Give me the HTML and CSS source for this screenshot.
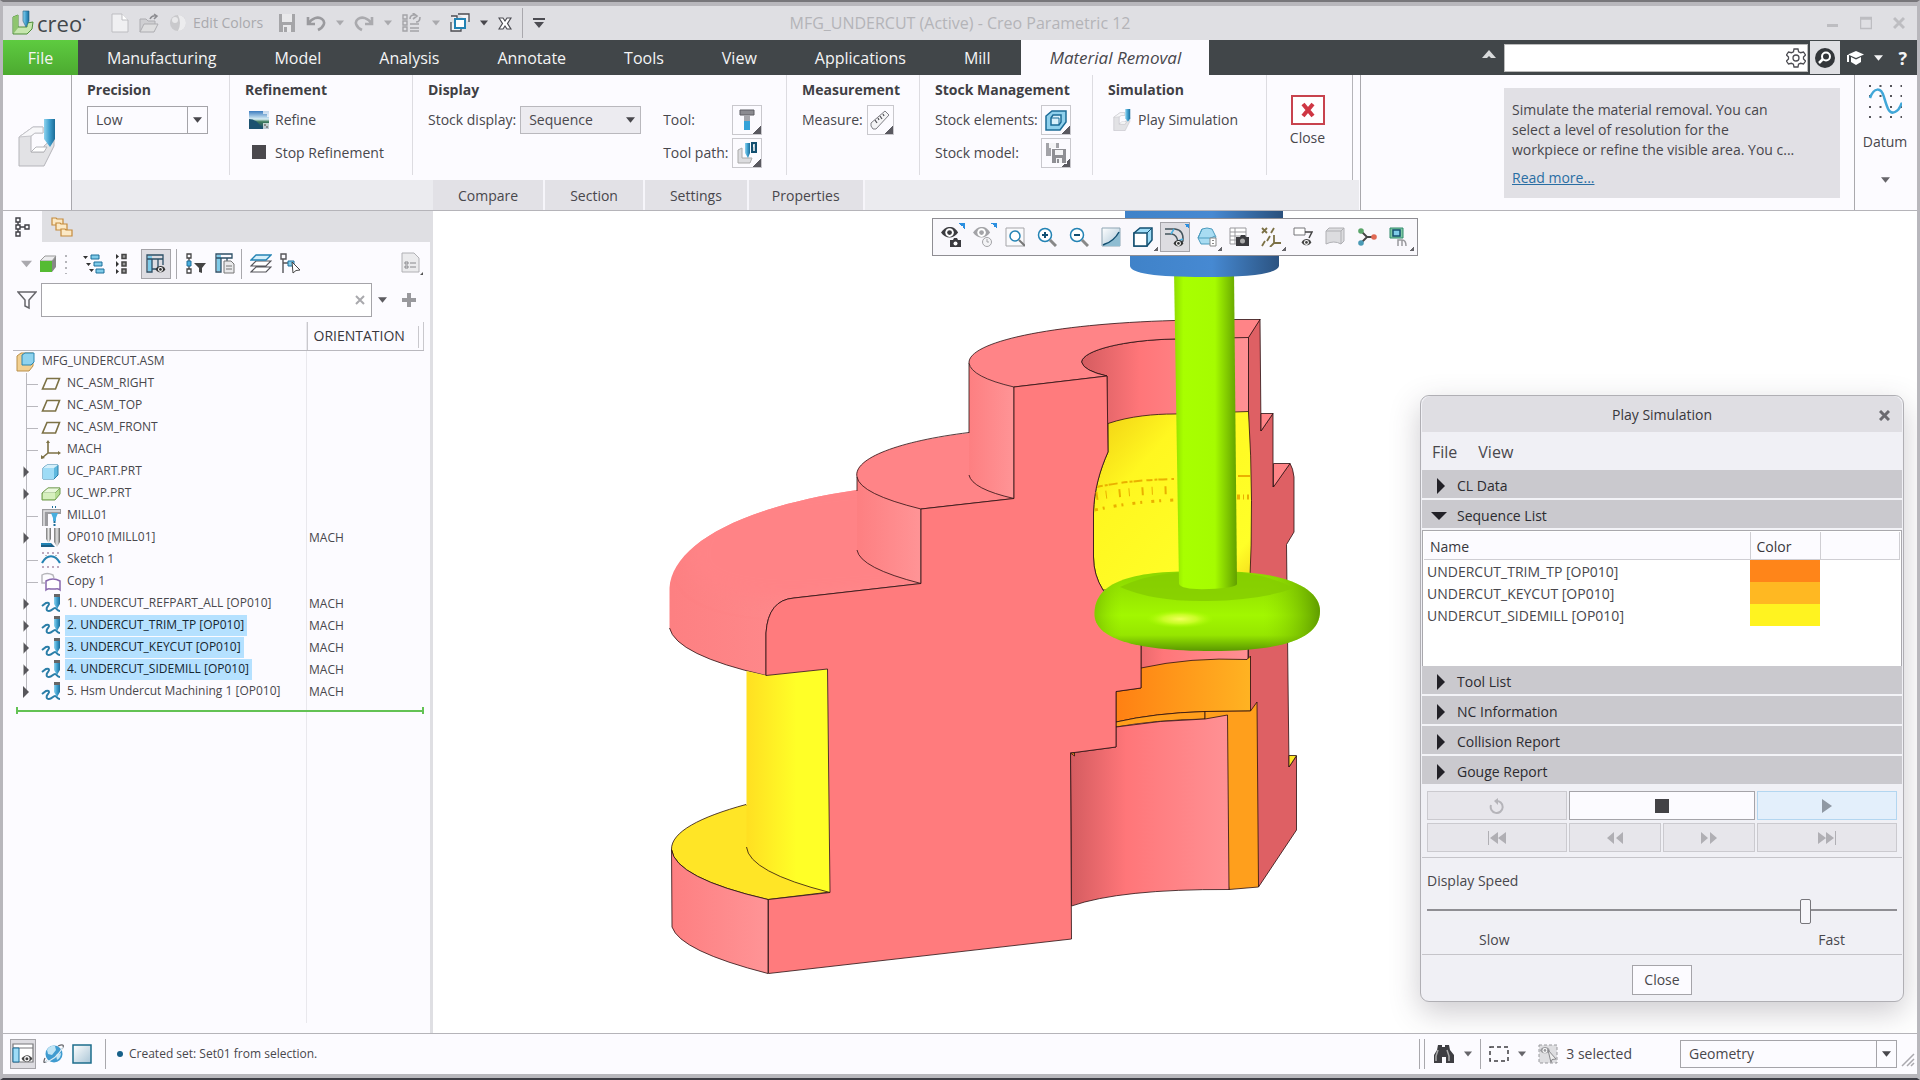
FILE: index.html
```html
<!DOCTYPE html>
<html lang="en">
<head>
<meta charset="utf-8">
<title>MFG_UNDERCUT (Active) - Creo Parametric 12</title>
<link rel="stylesheet" href="styles.css">
</head>
<body>
<svg class="defs" width="0" height="0" aria-hidden="true">
  <defs>
    <linearGradient id="gBlue" x1="0" x2="1"><stop offset="0" stop-color="#8fd3ee"/><stop offset=".5" stop-color="#3f9fce"/><stop offset="1" stop-color="#1c6c97"/></linearGradient>
    <linearGradient id="gGrey" x1="0" x2="1"><stop offset="0" stop-color="#777"/><stop offset=".5" stop-color="#e6e6e6"/><stop offset="1" stop-color="#666"/></linearGradient>
    <linearGradient id="gSheet" x1="0" y1="0" x2="1" y2="1"><stop offset="0" stop-color="#fff"/><stop offset="1" stop-color="#a9c5d6"/></linearGradient>
    <linearGradient id="gLand" x1="0" y1="0" x2="0" y2="1"><stop offset="0" stop-color="#3c7cc0"/><stop offset=".45" stop-color="#d8eef5"/><stop offset=".6" stop-color="#3d7a5a"/><stop offset="1" stop-color="#16476e"/></linearGradient>
    <radialGradient id="gGlobe" cx=".35" cy=".3"><stop offset="0" stop-color="#d5f0fb"/><stop offset="1" stop-color="#2c87bf"/></radialGradient>
    <symbol id="caret" viewBox="0 0 10 6"><path d="M0 0h10L5 6z" fill="currentColor"/></symbol>
    <symbol id="s-path" viewBox="0 0 20 20"><path d="M1 12l4-3c3-1 4 1 2 3s-2 5 1 5 4-3 6-3 2 3 5 3" fill="none" stroke="#2b7ea8" stroke-width="2"/><path d="M13 1h6v9l-3 5-3-5z" fill="url(#gBlue)"/><path d="M13 0h6v3h-6z" fill="#666"/></symbol>
    <symbol id="s-plane" viewBox="0 0 20 20"><path d="M6 4.500h12.500l-4 10.500h-13z" fill="none" stroke="#7c7145" stroke-width="1.600"/></symbol>
    <symbol id="s-br" viewBox="0 0 28 22"><path d="M13.500 0v22M14 11.500h11" stroke="#b9b8be" fill="none"/></symbol>
    <symbol id="s-ex" viewBox="0 0 28 22"><path d="M13.500 0v22" stroke="#b9b8be"/><path d="M10 5v12l6-6z" fill="#58575c"/><path d="M10 5v12" stroke="#fff"/></symbol>
    <symbol id="s-exlast" viewBox="0 0 28 22"><path d="M13.500 0v10" stroke="#b9b8be"/><path d="M10 5v12l6-6z" fill="#58575c"/></symbol>
    <symbol id="s-eye" viewBox="0 0 20 20"><path d="M0 8C5 0 14 0 18 8 13 15 5 15 0 8z" fill="currentColor"/><circle cx="9" cy="8" r="4.500" fill="#fff"/><circle cx="9" cy="8" r="2.500" fill="currentColor"/></symbol>
    <symbol id="s-cut" viewBox="0 0 38 48"><path d="M1 18l14-10h10v6H17l-4 3v16h13v-6l10-9v9L26 47H1z" fill="#e2e2e5" stroke="#b5b5ba"/><path d="M1 18l14-10h10v6H17l-4 3z" fill="#f7f7f9" stroke="#c5c5ca"/><path d="M13 33l5-5h11l-3 5z" fill="#fff" stroke="#b5b5ba"/><path d="M26 0h11v20l-5 8-6-8z" fill="url(#gBlue)"/></symbol>
  </defs>
</svg>
<div class="window">
  <header class="titlebar">
    <svg class="logo" width="24" height="26" viewBox="0 0 24 26"><path d="M2 7l5-2v12h9v-4l6-1-1 7-5 5H2z" fill="#c6e6ae" stroke="#4f8f3a"/><path d="M2 7l5-2v13l-4 5" fill="#8fc56f"/><path d="M12 1h6v10l-3 6-3-6z" fill="url(#gBlue)" stroke="#1d5f85" stroke-width=".6"/></svg>
    <span class="brand">creo<sup>•</sup></span>
    <div class="quick">
      <button aria-label="New"><svg width="18" height="20" viewBox="0 0 18 20"><path d="M1 1h10l6 6v12H1z" fill="#f0f0f2" stroke="#bdbdc1"/><path d="M11 1v6h6" fill="#fff" stroke="#bdbdc1"/></svg></button>
      <button aria-label="Open"><svg width="20" height="20" viewBox="0 0 20 20"><path d="M1 19V6h6l2 2h7v3" fill="#cfcfd2" stroke="#adadb1"/><path d="M1 19l4-8h14l-4 8z" fill="#dededf" stroke="#adadb1"/><path d="M11 6q2-4 6-3m-2-2l3 2-3 3" fill="none" stroke="#8c8c90" stroke-width="1.500"/></svg></button>
      <button class="labelled"><svg width="18" height="20" viewBox="0 0 18 20"><circle cx="9" cy="10" r="8" fill="#c9c9cc"/><path d="M9 2a8 8 0 0 1 0 16q4-8 0-16" fill="#ececee"/><circle cx="6" cy="7" r="3" fill="#e8e8ea"/></svg>Edit Colors</button>
      <button aria-label="Save"><svg width="18" height="20" viewBox="0 0 18 20"><path d="M1 1h16v18H1z" fill="#a5a5a8"/><path d="M4 1h10v8H4zM5 12h8v7H5z" fill="#e9e9eb"/><path d="M6 14h3v5H6z" fill="#a5a5a8"/></svg></button>
      <button aria-label="Undo"><svg width="20" height="18" viewBox="0 0 20 18"><path d="M2 3v7h7M2 10C6 4 12 2 16 5s2 8-4 11" fill="none" stroke="#9a9a9e" stroke-width="2.600"/></svg></button>
      <button class="drop" aria-label="Undo list"><svg width="8" height="6"><use href="#caret"/></svg></button>
      <button aria-label="Redo"><svg width="20" height="18" viewBox="0 0 20 18"><path d="M18 3v7h-7M18 10C14 4 8 2 4 5s-2 8 4 11" fill="none" stroke="#aaaaae" stroke-width="2.600"/></svg></button>
      <button class="drop" aria-label="Redo list"><svg width="8" height="6"><use href="#caret"/></svg></button>
      <button aria-label="Regenerate"><svg width="20" height="20" viewBox="0 0 20 20"><path d="M1 2h4v4H1zM1 8h4v4H1zM1 14h4v4H1zM8 11h9M8 15h9M8 18h9" fill="none" stroke="#a4a4a8" stroke-width="1.400"/><path d="M8 6q0-4 4-4l-1-2 4 3-4 3M18 4q0 5-4 5" fill="none" stroke="#a4a4a8" stroke-width="1.600"/></svg></button>
      <button class="drop" aria-label="Regenerate list"><svg width="8" height="6"><use href="#caret"/></svg></button>
      <button aria-label="Windows"><svg width="20" height="20" viewBox="0 0 20 20"><path d="M8 1h11v8M1 3h6v6M1 9v9h10v-3" fill="#f4f4f6" stroke="#4c4c52" stroke-width="1.300"/><rect x="5" y="6" width="10" height="9" fill="#fff" stroke="#2383b4" stroke-width="2"/></svg></button>
      <button class="drop dark" aria-label="Window list"><svg width="8" height="6"><use href="#caret"/></svg></button>
      <button aria-label="Close window"><svg width="14" height="13" viewBox="0 0 14 13"><path d="M1 1h4l2 3 2-3h4L9.500 6.500 13 12H9L7 9l-2 3H1l3.500-5.500z" fill="#fff" stroke="#4c4c52" stroke-width="1.200"/></svg></button>
      <i class="vr"></i>
      <button aria-label="Customize toolbar"><svg width="12" height="10" viewBox="0 0 12 10"><path d="M0 0h12v2H0zM1 4h10l-5 6z" fill="#4c4c52"/></svg></button>
    </div>
    <h1 class="title">MFG_UNDERCUT (Active) - Creo Parametric 12</h1>
    <div class="winbtns">
      <button aria-label="Minimize"><svg width="12" height="14" viewBox="0 0 12 14"><path d="M0 9.500h11" stroke="#bdbdc1" stroke-width="3"/></svg></button>
      <button aria-label="Maximize"><svg width="12" height="14" viewBox="0 0 12 14"><path d="M.5 1.500h11v11H.5zM1 3h10" fill="none" stroke="#bdbdc1" stroke-width="1.500"/></svg></button>
      <button aria-label="Close"><svg width="12" height="14" viewBox="0 0 12 14"><path d="M1 2l10 10M11 2L1 12" stroke="#bdbdc1" stroke-width="3"/></svg></button>
    </div>
  </header>

  <nav class="tabs">
    <button class="file">File</button>
    <button>Manufacturing</button><button>Model</button><button>Analysis</button><button>Annotate</button><button>Tools</button><button>View</button><button>Applications</button><button>Mill</button>
    <button class="current">Material Removal</button>
    <div class="tabtools">
      <button aria-label="Minimize ribbon" class="chev"><svg width="14" height="8" viewBox="0 0 14 8"><path d="M0 8l7-8 7 8H9L7 6 5 8z" fill="#d8dadb"/></svg></button>
      <div class="search"><input type="text" aria-label="Search commands"><svg width="20" height="20" viewBox="0 0 20 20"><path d="M8 1h4l.6 2.800 2 .9L17.500 4l2 3-2 2v2l2 2-2 3-3-.7-2 .9L12 19H8l-.6-2.800-2-.9L2.500 16l-2-3 2-2V9l-2-2 2-3 3 .7 2-.9z" fill="none" stroke="#4c4c52" stroke-width="1.300"/><circle cx="10" cy="10" r="3" fill="none" stroke="#4c4c52" stroke-width="1.300"/></svg></div>
      <button class="find" aria-label="Find"><svg width="22" height="22" viewBox="0 0 22 22"><circle cx="11" cy="11" r="10" fill="#33363a"/><circle cx="12" cy="9.500" r="4" fill="none" stroke="#fff" stroke-width="2"/><path d="M9 12l-4 4" stroke="#fff" stroke-width="2.500"/></svg></button>
      <button aria-label="Learning" class="hat"><svg width="17" height="14" viewBox="0 0 17 14"><path d="M9 0l8 3.500L9 7 1 3.500z" fill="#fff"/><path d="M4 6l5 2.500L14 6v5l-5 3-5-3zM0 4h2v7H0z" fill="#fff"/></svg></button>
      <button aria-label="Learning list" class="hat"><svg width="9" height="6"><use href="#caret"/></svg></button>
      <button class="help" aria-label="Help">?</button>
    </div>
  </nav>

  <section class="ribbon">
    <div class="mode"><svg width="38" height="48"><use href="#s-cut"/></svg></div>
    <div class="ribmid">
      <div class="groups">
        <div class="group"><h2>Precision</h2>
          <div class="row"><div class="pick split"><select aria-label="Precision"><option>Low</option></select><svg width="9" height="6"><use href="#caret"/></svg></div></div>
        </div>
        <div class="group"><h2>Refinement</h2>
          <div class="row"><button class="cmd"><svg width="20" height="18" viewBox="0 0 20 18"><rect width="20" height="18" fill="url(#gLand)"/><path d="M0 8q6 0 10 5t8 5H0z" fill="#1c5270"/><path d="M14 0h6v6h-2V3h-4zM14 12h6v6h-6z" fill="#fff" opacity=".7"/><path d="M15 13h2v2h-2zM17 15h2v2h-2z" fill="#888"/></svg>Refine</button></div>
          <div class="row"><button class="cmd"><svg width="20" height="18" viewBox="0 0 20 18"><rect x="3" y="1" width="14" height="14" fill="#4a484d"/></svg>Stop Refinement</button></div>
        </div>
        <div class="group two"><div><h2>Display</h2>
          <div class="row"><label for="stock">Stock display:</label><div class="pick plain"><select id="stock"><option>Sequence</option></select><svg width="9" height="6"><use href="#caret"/></svg></div></div></div>
          <div class="fields">
            <span>Tool:</span><button class="tile" aria-label="Tool"><svg width="20" height="22" viewBox="0 0 20 22"><path d="M3 1h14v5H3z" fill="#8b8b90" stroke="#5d5d62"/><path d="M7 6h6v7H7z" fill="#a5a5aa"/><path d="M7 12h6v9H7z" fill="#35a2d8"/></svg></button>
            <span>Tool path:</span><button class="tile" aria-label="Tool path"><svg width="20" height="22" viewBox="0 0 20 22"><path d="M1 8l4-2v10h10l-2 5H1z" fill="#dcdcdf" stroke="#aaa"/><path d="M8 1h5v10l-2 5-3-5z" fill="url(#gBlue)"/><rect x="14" y="0" width="6" height="11" fill="#134f70"/><path d="M17 2v7m-1-5h1" stroke="#fff" stroke-width="1.500"/></svg></button>
          </div>
        </div>
        <div class="group"><h2>Measurement</h2>
          <div class="row"><span>Measure:</span><button class="tile" aria-label="Measure"><svg width="22" height="22" viewBox="0 0 22 22"><path d="M2 14L16 2l4 4L7 20H4l-2-3z" fill="#f4f4f6" stroke="#7e7e84"/><path d="M6 11l2 3m1-5l1 2m1-4l2 3m1-5l1 2" stroke="#55555a" stroke-width="1.300"/></svg></button></div>
        </div>
        <div class="group"><h2>Stock Management</h2>
          <div class="fields">
            <span>Stock elements:</span><button class="tile" aria-label="Stock elements"><svg width="22" height="22" viewBox="0 0 22 22"><path d="M1 7l6-5h14v11l-6 8H1z" fill="#8fd0ec" stroke="#1c6c97" stroke-width="1.500"/><path d="M6 9l2-3h8v7l-2 3H6z" fill="#d9f1fb" stroke="#1c6c97" stroke-width="1.500"/><path d="M6 9h8v7" fill="none" stroke="#1c6c97"/></svg></button>
            <span>Stock model:</span><button class="tile" aria-label="Stock model"><svg width="22" height="22" viewBox="0 0 22 22"><path d="M1 1h13v13H1z" fill="#a3a3a8"/><path d="M4 1h7v5H4z" fill="#f4f4f6"/><path d="M6 6h16v16H6z" fill="#fcfbff"/><path d="M7 7h14v14H7z" fill="#8f8f94"/><path d="M10 8h8v5h-8zM11 16h6v5h-6z" fill="#f4f4f6"/><path d="M12 17h2v4h-2z" fill="#8f8f94"/></svg></button>
          </div>
        </div>
        <div class="group"><h2>Simulation</h2>
          <div class="row"><button class="cmd"><svg width="20" height="22"><use href="#s-cut"/></svg>Play Simulation</button></div>
        </div>
        <div class="group last"><button class="big"><svg width="34" height="30" viewBox="0 0 34 30"><rect x="1" y="1" width="32" height="28" fill="#fff" stroke="#c8434e" stroke-width="2"/><path d="M12 9l10 12M22 9L12 21" stroke="#cf3743" stroke-width="4"/></svg>Close</button></div>
      </div>
      <div class="slides"><button>Compare</button><button>Section</button><button>Settings</button><button>Properties</button></div>
    </div>
    <div class="ribright">
      <div class="tip"><p>Simulate the material removal. You can select a level of resolution for the workpiece or refine the visible area. You c...</p><a href="#">Read more...</a></div>
    </div>
    <div class="datum"><button class="big"><svg width="34" height="36" viewBox="0 0 34 36"><path d="M1 2h34M1 12h34M1 23h34M1 33h34" stroke="#55555a" stroke-width="2" stroke-dasharray="2 8.500"/><path d="M2 14C6 3 13 3 16 13s5 18 11 15 5-7 7-9" fill="none" stroke="#41a7d8" stroke-width="2.500"/></svg><span>Datum</span><svg class="dc" width="9" height="6"><use href="#caret"/></svg></button></div>
  </section>

  <main class="work">
    <aside class="panel">
      <div class="ptabs">
        <button class="on" aria-label="Model tree"><svg width="16" height="22" viewBox="0 0 16 22"><path d="M1 2h4v4H1zM1 9h4v4H1zM1 16h4v4H1zM10 9h4v4h-4zM5 11h5M3 6v3M3 13v3" fill="none" stroke="#3f3f45" stroke-width="1.400"/></svg></button>
        <button aria-label="Folders"><svg width="22" height="22" viewBox="0 0 22 22"><g fill="#fbe9c6" stroke="#c58b3c" stroke-width="1.200"><path d="M1 2h4l1 1h6v6H1z"/><path d="M5 7h4l1 1h6v6H5z"/><path d="M10 13h4l1 1h6v6H10z"/></g></svg></button>
      </div>
      <div class="ptools">
        <svg width="11" height="8" class="dim"><use href="#caret"/></svg>
        <svg width="18" height="18" viewBox="0 0 18 18"><path d="M1 6l5-5h11v11l-4 5H1z" fill="#888"/><path d="M1 6l5-5h11l-4 5z" fill="#ececee" stroke="#999"/><path d="M1 6h12v11H1z" fill="#55bb33"/></svg>
        <svg width="4" height="20" viewBox="0 0 4 20"><path d="M2 1v20" stroke="#b5b5ba" stroke-width="2" stroke-dasharray="2 4"/></svg>
        <button aria-label="Expand tree"><svg width="22" height="22" viewBox="0 0 22 22"><path d="M0 3h5L2.500 6zM3 10h5l-2.500 3zM6 16h5l-2.500 3z" fill="#333"/><path d="M8 2h8v4H8zM11 9h8v4h-8zM13 16h8v4h-8z" fill="#7fcbe9" stroke="#1d6f9a"/></svg></button>
        <button aria-label="Collapse tree"><svg width="14" height="22" viewBox="0 0 14 22"><path d="M0 1v5l3-2.500zM0 8v6l3-3zM0 16v5l3-2.500z" fill="#333"/><path d="M6 1.500h4v4H6zM6 9h4v4H6zM6 16h4v4H6z" fill="#999" stroke="#444" stroke-width="1.500"/></svg></button>
        <button class="pressed" aria-label="Show columns"><svg width="20" height="22" viewBox="0 0 20 22"><path d="M2 3h4v15H2z" fill="#7fcbe9"/><path d="M1 2h16v4H1zM1 6h5v13H1zM6 6h6v10H6zM12 6h5v6" fill="none" stroke="#2c4f66" stroke-width="1.300"/><svg x="9" y="12" width="12" height="11" color="#333"><use href="#s-eye"/></svg></svg></button>
        <i class="vr"></i>
        <button aria-label="Tree filters"><svg width="20" height="22" viewBox="0 0 20 22"><path d="M1 1h4v4H1zM1 16h4v4H1zM3 5v11" fill="none" stroke="#444" stroke-width="1.300"/><path d="M1 8h4v5H1z" fill="#49aede" stroke="#1d6f9a"/><path d="M8 10h12l-4 5v5l-3-1v-4z" fill="#444"/></svg></button>
        <button aria-label="Tree columns"><svg width="20" height="22" viewBox="0 0 20 22"><path d="M2 2h4v16H2z" fill="#7fcbe9"/><path d="M1 1h16v4H1zM1 5h5v14H1zM6 5h6v4" fill="none" stroke="#2c4f66" stroke-width="1.300"/><path d="M9 8h7l3 3v9H9z" fill="#e9e9eb" stroke="#777"/><path d="M11 13h6M11 16h6" stroke="#777"/></svg></button>
        <i class="vr"></i>
        <button aria-label="Layers"><svg width="22" height="22" viewBox="0 0 22 22"><path d="M1 19l5-5h15l-5 5zM1 13l5-5h15l-5 5z" fill="#fff" stroke="#55555a" stroke-width="1.200"/><path d="M1 7l5-5h15l-5 5z" fill="#d5effa" stroke="#2383b4" stroke-width="1.300"/></svg></button>
        <button aria-label="Select in tree"><svg width="20" height="22" viewBox="0 0 20 22"><path d="M1 1h5v5H1zM3 6v14M3 10h5" fill="none" stroke="#55555a" stroke-width="1.400"/><path d="M8 8h6v5H8z" fill="#7fcbe9" stroke="#1d6f9a"/><path d="M12 9l8 8-4 .5L13 20z" fill="#fff" stroke="#444"/></svg></button>
        <button class="pushed" aria-label="Tree settings"><svg width="22" height="24" viewBox="0 0 22 24"><path d="M1 1h12l5 5v14H1z" fill="#ebebed" stroke="#b0b0b4"/><path d="M4 10h3v2H4zM4 14h3v2H4zM9 11h6M9 15h6" fill="none" stroke="#88888c"/><path d="M22 20v3h-3z" fill="#555"/></svg></button>
      </div>
      <div class="pfilter">
        <svg width="20" height="20" viewBox="0 0 20 20"><path d="M1 2h18l-7 8v8l-4-2v-6z" fill="none" stroke="#66666b" stroke-width="1.500"/></svg>
        <div class="fbox"><input type="text" aria-label="Filter tree"><svg width="10" height="10" viewBox="0 0 10 10"><path d="M1 1l8 8M9 1L1 9" stroke="#a9a9ad" stroke-width="2"/></svg></div>
        <svg width="9" height="6" class="mid"><use href="#caret"/></svg>
        <svg width="14" height="14" viewBox="0 0 14 14"><path d="M7 0v14M0 7h14" stroke="#99999d" stroke-width="4"/></svg>
      </div>
      <div class="treebox">
      <table class="tree">
        <thead><tr><th></th><th><i></i>ORIENTATION</th></tr></thead>
        <tbody>
        <tr><td><div class="n root"><svg width="20" height="20" viewBox="0 0 20 20"><path d="M1 4l4-3h12v13l-4 5H1z" fill="#f2d091" stroke="#b98f4a"/><path d="M6 3l3-2h9v9l-3 3H6z" fill="#8fd3ee" stroke="#2b86b0"/></svg><span>MFG_UNDERCUT.ASM</span></div></td><td></td></tr>
        <tr><td><div class="n"><svg width="28" height="22"><use href="#s-br"/></svg><svg width="20" height="20"><use href="#s-plane"/></svg><span>NC_ASM_RIGHT</span></div></td><td></td></tr>
        <tr><td><div class="n"><svg width="28" height="22"><use href="#s-br"/></svg><svg width="20" height="20"><use href="#s-plane"/></svg><span>NC_ASM_TOP</span></div></td><td></td></tr>
        <tr><td><div class="n"><svg width="28" height="22"><use href="#s-br"/></svg><svg width="20" height="20"><use href="#s-plane"/></svg><span>NC_ASM_FRONT</span></div></td><td></td></tr>
        <tr><td><div class="n"><svg width="28" height="22"><use href="#s-br"/></svg><svg width="20" height="20" viewBox="0 0 20 20"><path d="M7 2v11h11M7 13l-6 5" fill="none" stroke="#7c7145" stroke-width="1.600"/><path d="M5 3l2-3 2 3zM17 11l3 2-3 2zM0 19v-4l4 3z" fill="#7c7145"/></svg><span>MACH</span></div></td><td></td></tr>
        <tr><td><div class="n"><svg width="28" height="22"><use href="#s-ex"/></svg><svg width="20" height="20" viewBox="0 0 20 20"><path d="M2 6l4-3h11v10l-4 4H2z" fill="#5fb8de" stroke="#2b7ea8"/><path d="M2 6l4-3h11l-4 3z" fill="#d5f0fb"/><path d="M2 6h11v11H2z" fill="#9fdcf6"/></svg><span>UC_PART.PRT</span></div></td><td></td></tr>
        <tr><td><div class="n"><svg width="28" height="22"><use href="#s-ex"/></svg><svg width="20" height="20" viewBox="0 0 20 20"><path d="M1 9l6-5h12v6l-5 6H1z" fill="#b5dd93" stroke="#6f9a4d"/><path d="M1 9l6-5h12l-5 5z" fill="#eaf8dc" stroke="#6f9a4d" stroke-width=".7"/><path d="M2 9h12v6H2z" fill="#d6f0bd"/></svg><span>UC_WP.PRT</span></div></td><td></td></tr>
        <tr><td><div class="n"><svg width="28" height="22"><use href="#s-br"/></svg><svg width="20" height="20" viewBox="0 0 20 20"><path d="M1 20V3h19v5H7v12z" fill="#9b9b9f"/><path d="M3 20V5h16" fill="none" stroke="#e4e4e6" stroke-width="1.500"/><path d="M10 7h7l-2 5v3h-3v-3z" fill="#49aede"/><path d="M13.500 15v5" stroke="#1d6f9a" stroke-width="2" stroke-dasharray="2 1"/><path d="M11 1h6" stroke="#1d6f9a" stroke-width="2" stroke-dasharray="1 2"/></svg><span>MILL01</span></div></td><td></td></tr>
        <tr><td><div class="n"><svg width="28" height="22"><use href="#s-ex"/></svg><svg width="20" height="20" viewBox="0 0 20 20"><path d="M5 0h5v11l-2.500 4L5 11z" fill="url(#gGrey)"/><path d="M13 0h6v14l-3 5-3-5z" fill="url(#gGrey)"/><path d="M0 15h10v2H0z" fill="#2383b4"/><path d="M10 15l4 4H0v-2h10" fill="#1d5f85"/></svg><span>OP010 [MILL01]</span></div></td><td>MACH</td></tr>
        <tr><td><div class="n"><svg width="28" height="22"><use href="#s-br"/></svg><svg width="20" height="20" viewBox="0 0 20 20"><path d="M1 3h18M1 17h18" stroke="#a98fa9" stroke-width="1.500" stroke-dasharray="2 3"/><path d="M1 13C6 4 14 4 19 13" fill="none" stroke="#2383b4" stroke-width="2.200"/><path d="M5 5v5M15 5v5" stroke="#777" stroke-dasharray="1 2"/></svg><span>Sketch 1</span></div></td><td></td></tr>
        <tr><td><div class="n"><svg width="28" height="22"><use href="#s-br"/></svg><svg width="20" height="20" viewBox="0 0 20 20"><path d="M4 11H1V3q5-3 11 0l1 3" fill="none" stroke="#b5b5ba" stroke-width="1.400"/><path d="M5 9q7-4 14 0v9q-3-2-4-1H9q-1-1-4 1z" fill="#fff" stroke="#8868ad" stroke-width="1.500"/></svg><span>Copy 1</span></div></td><td></td></tr>
        <tr><td><div class="n"><svg width="28" height="22"><use href="#s-ex"/></svg><svg width="20" height="20"><use href="#s-path"/></svg><span>1. UNDERCUT_REFPART_ALL [OP010]</span></div></td><td>MACH</td></tr>
        <tr class="sel"><td><div class="n"><svg width="28" height="22"><use href="#s-ex"/></svg><svg width="20" height="20"><use href="#s-path"/></svg><span>2. UNDERCUT_TRIM_TP [OP010]</span></div></td><td>MACH</td></tr>
        <tr class="sel"><td><div class="n"><svg width="28" height="22"><use href="#s-ex"/></svg><svg width="20" height="20"><use href="#s-path"/></svg><span>3. UNDERCUT_KEYCUT [OP010]</span></div></td><td>MACH</td></tr>
        <tr class="sel"><td><div class="n"><svg width="28" height="22"><use href="#s-ex"/></svg><svg width="20" height="20"><use href="#s-path"/></svg><span>4. UNDERCUT_SIDEMILL [OP010]</span></div></td><td>MACH</td></tr>
        <tr><td><div class="n"><svg width="28" height="22"><use href="#s-exlast"/></svg><svg width="20" height="20"><use href="#s-path"/></svg><span>5. Hsm Undercut Machining 1 [OP010]</span></div></td><td>MACH</td></tr>
        </tbody>
      </table>
      <div class="insert"></div>
      </div>
    </aside>

    <section class="canvas">
      <svg class="model" viewBox="433 211 1484 822" preserveAspectRatio="xMidYMid meet" role="img" aria-label="Milled part with tool">
        <defs>
          <linearGradient id="sideL" x1="0" x2="1"><stop offset="0" stop-color="#fd7f81"/><stop offset="1" stop-color="#ff9496"/></linearGradient>
          <linearGradient id="inner" x1="0" x2="1"><stop offset="0" stop-color="#d45c60"/><stop offset=".35" stop-color="#ff7679"/><stop offset="1" stop-color="#ff9194"/></linearGradient>
          <linearGradient id="yel" x1="0" x2="1"><stop offset="0" stop-color="#ffdf22"/><stop offset=".6" stop-color="#ffff27"/><stop offset="1" stop-color="#ffff27"/></linearGradient>
          <linearGradient id="bore" x1="0" y1="0" x2="1" y2="1"><stop offset="0" stop-color="#f0cd14"/><stop offset=".3" stop-color="#fff720"/><stop offset=".85" stop-color="#ffff28"/><stop offset="1" stop-color="#f3d31a"/></linearGradient>
          <linearGradient id="ora" x1="0" x2="1"><stop offset="0" stop-color="#ff8013"/><stop offset="1" stop-color="#ffb322"/></linearGradient>
          <linearGradient id="shaft" x1="0" x2="1"><stop offset="0" stop-color="#8fdc00"/><stop offset=".15" stop-color="#a8ff00"/><stop offset=".65" stop-color="#a6fc00"/><stop offset="1" stop-color="#62a000"/></linearGradient>
          <linearGradient id="holder" x1="0" x2="1"><stop offset="0" stop-color="#3f82c8"/><stop offset=".55" stop-color="#4689d2"/><stop offset="1" stop-color="#2a507c"/></linearGradient>
          <linearGradient id="tor" x1="0" y1="0" x2="0" y2="1"><stop offset="0" stop-color="#8bd600"/><stop offset=".55" stop-color="#a2f700"/><stop offset=".8" stop-color="#96e600"/><stop offset="1" stop-color="#5a9800"/></linearGradient>
          <linearGradient id="torx" x1="0" x2="1"><stop offset="0" stop-color="#5f9c00" stop-opacity=".5"/><stop offset=".12" stop-color="#8bd600" stop-opacity="0"/><stop offset=".75" stop-color="#8bd600" stop-opacity="0"/><stop offset="1" stop-color="#4f8600" stop-opacity=".8"/></linearGradient>
          <radialGradient id="glow"><stop offset="0" stop-color="#f4ff60"/><stop offset=".5" stop-color="#d4ff30" stop-opacity=".8"/><stop offset="1" stop-color="#a8ff00" stop-opacity="0"/></radialGradient>
          <clipPath id="domeclip"><path d="M857 490C740 507 672 545 669.500 588V628Q676 655 766 675.500V633Q768 600 794 598L921 583V500z"/></clipPath>
          <filter id="soft" x="-20%" y="-20%" width="140%" height="140%"><feGaussianBlur stdDeviation="9"/></filter>
        </defs>
        <g stroke="#2a0f10" stroke-width=".8" stroke-linejoin="round">
          <path d="M1260 319L1261 431 1273 413.500V487L1290 463.500Q1293 468 1294 477V532L1286.500 544.500 1289 767 1296.500 756V830L1258.500 887 1248.500 870V337z" fill="#de6064"/>
          <path d="M1261 413.500h12L1261 431zM1273.500 463.500H1290L1273.500 487z" fill="#ff8487"/>
          <path d="M1289 755.500h7.500L1289 767z" fill="#ffe526"/>
          <path d="M1081.500 362C1083 350 1125 340 1174 339L1248.500 337V560H1107V376Q1082 370 1081.500 362z" fill="url(#inner)"/>
          <path d="M1108 423.500C1130 416 1155 414 1174 414L1248.500 411.500Q1254 500 1249.500 590H1103Q1093.500 575 1093.500 557V513C1094 490 1100 470 1108 452z" fill="url(#bore)"/>
          <path d="M1141 630h107v31l2-4v54l-34 5H1116v-25l25-3z" fill="url(#inner)"/>
          <path d="M1116 691.500L1141 688V668Q1190 657 1247 659.500L1250.500 656V711L1205 711.500Q1155 713 1116 722z" fill="url(#ora)"/>
          <path d="M1116 722Q1155 713 1205 711.500V719Q1155 720 1116 727z" fill="#ff9f1c"/>
          <path d="M1205 711.500L1250.500 711 1257 702 1258.500 887 1229 889.500 1205 719z" fill="#ff9f1c"/>
          <path d="M1070.500 753L1116 747V727Q1160 720 1205 719L1227.500 715 1229 889.500Q1120 889 1071.500 906z" fill="url(#inner)"/>
          <g clip-path="url(#domeclip)" stroke="none">
            <path d="M660 480h270v200H660z" fill="url(#sideL)"/>
            <path d="M940 470L720 495C690 530 680 560 700 580Q725 600 800 600L940 590z" fill="#ff8386" filter="url(#soft)"/>
          </g>
          <path d="M669.500 628Q676 655 766 675.500V633Q768 600 794 598L921 583.500" fill="none"/>
          <path d="M857 477V550Q860 568 921 583.500V509Q863 494 857 477z" fill="url(#sideL)" stroke="none"/>
          <path d="M857 550Q860 568 921 583.500V509" fill="none"/>
          <path d="M969 433C900 441 853 458 857 477Q860 494 921 509L1014 498.500V440z" fill="#ff8487" stroke="none"/>
          <path d="M969 432.500C900 441 853 458 857 477Q860 494 921 509L1014 498.500" fill="none"/>
          <path d="M857 477V491" fill="none"/>
          <path d="M969 363V475Q972 489 1014 498.500V387Q971 377 969 363z" fill="url(#sideL)" stroke="none"/>
          <path d="M969 475Q972 489 1014 498.500V387M969 363V433" fill="none"/>
          <path d="M1260 319.500H1228L1174 320.500C1050 324 968 342 969 363Q971 377 1014 387L1107 376Q1084 371 1081.500 362C1083 350 1125 340 1174 339L1248.500 337.500z" fill="#ff8487"/>
          <path d="M746 804.500C700 817 671 832 671.500 849.500Q675 878 768 899.500L830 892Z" fill="#ffe526"/>
          <path d="M671.500 849.500Q675 878 768 899.500V973.500Q680 951 672 927z" fill="url(#sideL)"/>
          <path d="M746.500 671L766 675.500 827.500 669 830 892.500Q749 872 746.500 847z" fill="url(#yel)" stroke="none"/>
          <path d="M830 892.500Q749 872 746.500 847" fill="none"/>
          <path d="M1014 387L1107 376 1108 452C1100 470 1094 490 1093.500 513V557Q1093.500 575 1103 590L1141 640V688L1116 691.500V747L1070.500 753 1071.500 939 768.500 973.500V899.500L830 892.500 827.500 669 766 675.500V633Q768 600 794 598L921 583.500V509L1014 498.500z" fill="#ff7b7d"/>
          <path d="M1070.500 753h4v3z" fill="#ff9f1c"/>
        </g>
        <g stroke="#eab000" stroke-width="2" fill="none">
          <path d="M1097 487Q1130 480 1174 479" stroke-dasharray="6 2 3 1 9 4"/><path d="M1238 476h12"/>
          <path d="M1096 496Q1130 491 1174 490" stroke-dasharray="2 8 1 12" stroke-width="8"/>
          <path d="M1095 510Q1130 502 1174 500" stroke-dasharray="3 5 2 9" stroke-width="3"/>
          <path d="M1237 497h12" stroke-dasharray="3 3 1 3" stroke-width="5"/>
        </g>
        <path d="M1094.500 614C1094.500 590 1115 573 1180 571.500H1230C1290 573 1320 590 1320 611C1320 636 1290 651 1212 651C1130 651 1094.500 637 1094.500 614z" fill="url(#tor)"/>
        <path d="M1094.500 614C1094.500 590 1115 573 1180 571.500H1230C1290 573 1320 590 1320 611C1320 636 1290 651 1212 651C1130 651 1094.500 637 1094.500 614z" fill="url(#torx)"/>
        <path d="M1120 587Q1150 572 1205 571T1294 588Q1262 600 1208 601T1120 587z" fill="#84cc00" opacity=".8"/>
        <ellipse cx="1180" cy="619" rx="34" ry="9" fill="url(#glow)"/>
        <path d="M1174 270H1234L1237 584Q1236 588 1209 589 1182 590 1179 584z" fill="url(#shaft)"/>
        <path d="M1125 211H1283V222L1279 256V266Q1277 277 1204 277T1130 266V256L1125 222z" fill="url(#holder)"/>
      </svg>

      <div class="viewbar">
        <button aria-label="Saved views" class="flag"><svg width="20" height="20" viewBox="0 0 20 20" color="#3b3b3f"><svg width="19" height="19" y="-2"><use href="#s-eye"/></svg><path d="M9 13h3l1-2h3l1 2h3v7H9z" fill="#3b3b3f"/><circle cx="14.500" cy="16.500" r="2" fill="#fff"/></svg></button>
        <button aria-label="Previous view" class="flag"><svg width="20" height="20" viewBox="0 0 20 20" color="#a3a3a7"><svg width="19" height="19" y="-2"><use href="#s-eye"/></svg><circle cx="14" cy="15" r="4.500" fill="#f4f4f6" stroke="#a3a3a7"/><path d="M14 12v3h2" stroke="#a3a3a7" fill="none"/></svg></button>
        <button aria-label="Refit"><svg width="20" height="20" viewBox="0 0 20 20"><path d="M1 1h18v18H1z" fill="#fafafc" stroke="#a5a5a9"/><circle cx="10" cy="9" r="5" fill="#fff" stroke="#2383b4" stroke-width="1.500"/><path d="M14 13l6 6" stroke="#777" stroke-width="2"/></svg></button>
        <button aria-label="Zoom in"><svg width="20" height="20" viewBox="0 0 20 20"><circle cx="8" cy="8" r="6.500" fill="#fff" stroke="#2383b4" stroke-width="1.500"/><path d="M13 13l6 6" stroke="#888" stroke-width="3"/><path d="M5 8h6M8 5v6" stroke="#124f72" stroke-width="2"/></svg></button>
        <button aria-label="Zoom out"><svg width="20" height="20" viewBox="0 0 20 20"><circle cx="8" cy="8" r="6.500" fill="#fff" stroke="#2383b4" stroke-width="1.500"/><path d="M13 13l6 6" stroke="#888" stroke-width="3"/><path d="M5 8h6" stroke="#124f72" stroke-width="2"/></svg></button>
        <button aria-label="Repaint"><svg width="20" height="20" viewBox="0 0 20 20"><path d="M1 1h18v18H1z" fill="url(#gSheet)" stroke="#8da5b3"/><path d="M19 4Q13 14 3 18v1h16z" fill="#8fbdd2"/><path d="M18 5Q13 14 4 17l-2 1" fill="none" stroke="#134f70" stroke-width="1.500"/></svg></button>
        <button aria-label="Display style" class="more"><svg width="20" height="20" viewBox="0 0 20 20"><path d="M1 6l6-5h12v12l-5 6H1z" fill="#9fdcf6" stroke="#134f70" stroke-width="1.500"/><path d="M1 6h13v13H1z" fill="#fff" stroke="#134f70" stroke-width="1.500"/><path d="M14 6l5-5" stroke="#134f70"/></svg></button>
        <button aria-label="Material removal display" class="pressed flag"><svg width="20" height="20" viewBox="0 0 20 20" color="#333"><path d="M0 2h10q9 1 8 12l-3 4M0 7h7q5 1 6 8" fill="none" stroke="#44545c" stroke-width="1.400"/><path d="M9 2L6 7m12 5l-5 2" stroke="#49aede" stroke-width="1.500"/><svg x="8" y="12" width="12" height="11"><use href="#s-eye"/></svg></svg></button>
        <button aria-label="Sections" class="more"><svg width="20" height="20" viewBox="0 0 20 20"><path d="M5 2l5-1 5 1 4 8-4 7H4l-3-6z" fill="#a8dcf2" stroke="#4d9cbf"/><path d="M1 11h13l4-2M5 2L1 11" stroke="#4d9cbf" fill="none"/><path d="M13 11h6v8h-6z" fill="#fff" stroke="#888"/><path d="M15 13h2v1h-2zM15 16h2v1h-2z" fill="#888"/></svg></button>
        <button aria-label="View manager"><svg width="20" height="20" viewBox="0 0 20 20"><path d="M1 1h16v16H1zM1 5h16M1 9h16M1 13h8M6 1v16" fill="#fff" stroke="#99999d"/><path d="M7 10h4l1-2h4l1 2h3v9H7z" fill="#3b3b3f"/><circle cx="13.500" cy="14" r="2.500" fill="#aaa"/></svg></button>
        <button aria-label="Datum display" class="more"><svg width="20" height="20" viewBox="0 0 20 20"><path d="M1 1l5 5M6 1L1 6M13 1l-3 5M9 9l-3 5M4 14l-3 5M13 8v8h7M13 16l-4 4" fill="none" stroke="#7c7145" stroke-width="1.800"/></svg></button>
        <button aria-label="Annotation display"><svg width="20" height="20" viewBox="0 0 20 20" color="#444"><path d="M1 1h11v7H1z" fill="#fff" stroke="#77777b"/><path d="M12 5h7l-3 6" fill="none" stroke="#444" stroke-width="1.500"/><svg x="8" y="11" width="12" height="11"><use href="#s-eye"/></svg></svg></button>
        <button aria-label="Perspective"><svg width="20" height="20" viewBox="0 0 20 20"><path d="M1 4l3-3h15v13l-3 3q-7-4-15 0z" fill="#dcdcdf" stroke="#b0b0b4"/><path d="M1 4h15v13M16 4l3-3" fill="none" stroke="#b0b0b4"/></svg></button>
        <button aria-label="Spin center"><svg width="20" height="20" viewBox="0 0 20 20"><path d="M4 4l6 6h7M10 10l-6 6" stroke="#444" stroke-width="1.800" fill="none"/><circle cx="4" cy="4" r="2.800" fill="#5aa56a"/><circle cx="17" cy="10" r="2.800" fill="#e06a55"/><circle cx="4" cy="16" r="2.800" fill="#4a9ab5"/></svg></button>
        <button aria-label="Simulation" class="more"><svg width="20" height="20" viewBox="0 0 20 20"><path d="M1 1h13v10H1z" fill="#7ec9a5" stroke="#2f8a6a"/><path d="M4 3h7v6H4z" fill="#7fcbe9" stroke="#134f70" stroke-width="1.500"/><path d="M9 19v-6h4q4 0 4 6M13 13v6" fill="none" stroke="#99999d" stroke-width="1.500"/></svg></button>
      </div>

      <section class="dialog" aria-label="Play Simulation">
        <header><h2>Play Simulation</h2><button aria-label="Close dialog"><svg width="11" height="11" viewBox="0 0 11 11"><path d="M1 1l9 9M10 1l-9 9" stroke="#6b6a70" stroke-width="3"/></svg></button></header>
        <div class="menu"><button>File</button><button>View</button></div>
        <div class="acc">
          <button><svg width="8" height="16" viewBox="0 0 8 16"><path d="M0 0l8 8-8 8z" fill="#222127"/></svg>CL Data</button>
          <button class="open"><svg width="16" height="8" viewBox="0 0 16 8"><path d="M0 0h16L8 8z" fill="#222127"/></svg>Sequence List</button>
          <div class="seqbox"><table class="seq"><thead><tr><th>Name</th><th>Color</th><th></th></tr></thead>
            <tbody><tr><td>UNDERCUT_TRIM_TP [OP010]</td><td class="c1"></td><td></td></tr><tr><td>UNDERCUT_KEYCUT [OP010]</td><td class="c2"></td><td></td></tr><tr><td>UNDERCUT_SIDEMILL [OP010]</td><td class="c3"></td><td></td></tr></tbody></table></div>
          <button><svg width="8" height="16" viewBox="0 0 8 16"><path d="M0 0l8 8-8 8z" fill="#222127"/></svg>Tool List</button>
          <button><svg width="8" height="16" viewBox="0 0 8 16"><path d="M0 0l8 8-8 8z" fill="#222127"/></svg>NC Information</button>
          <button><svg width="8" height="16" viewBox="0 0 8 16"><path d="M0 0l8 8-8 8z" fill="#222127"/></svg>Collision Report</button>
          <button><svg width="8" height="16" viewBox="0 0 8 16"><path d="M0 0l8 8-8 8z" fill="#222127"/></svg>Gouge Report</button>
        </div>
        <div class="player">
          <button class="w3" disabled aria-label="Restart"><svg width="16" height="16" viewBox="0 0 16 16"><path d="M2 7a6 6 0 1 0 5-4" fill="none" stroke="#b5b4b9" stroke-width="2"/><path d="M9 0v7L5 3z" fill="#b5b4b9"/></svg></button>
          <button class="w4 stop" aria-label="Stop"><svg width="14" height="14" viewBox="0 0 14 14"><path d="M0 0h14v14H0z" fill="#434246"/></svg></button>
          <button class="w3 play" aria-label="Play"><svg width="12" height="14" viewBox="0 0 12 14"><path d="M1 0l10 7-10 7z" fill="#8f98a3"/></svg></button>
          <button class="w3" disabled aria-label="To start"><svg width="20" height="14" viewBox="0 0 20 14"><path d="M1 0h1v14H1zM11 1v12L3 7zM19 1v12l-8-6z" fill="#b0afb4"/></svg></button>
          <button class="w2" disabled aria-label="Rewind"><svg width="18" height="14" viewBox="0 0 18 14"><path d="M8 1v12L1 7zM17 1v12l-7-6z" fill="#b0afb4"/></svg></button>
          <button class="w2" disabled aria-label="Fast forward"><svg width="18" height="14" viewBox="0 0 18 14"><path d="M1 1v12l7-6zM10 1v12l7-6z" fill="#b0afb4"/></svg></button>
          <button class="w3" disabled aria-label="To end"><svg width="20" height="14" viewBox="0 0 20 14"><path d="M18 0h1v14h-1zM1 1v12l8-6zM9 1v12l8-6z" fill="#b0afb4"/></svg></button>
        </div>
        <div class="speed"><label for="speed">Display Speed</label><input id="speed" type="range" min="0" max="1000" value="812"><div class="ends"><span>Slow</span><span>Fast</span></div></div>
        <footer><button>Close</button></footer>
      </section>
    </section>
  </main>

  <footer class="status">
    <button class="pressed" aria-label="Navigator"><svg width="22" height="22" viewBox="0 0 22 22" color="#444"><path d="M1 1h20v18H1zM1 5h20" fill="#fff" stroke="#77777b" stroke-width="1.200"/><path d="M1 5h6v14H1z" fill="#9fdcf6" stroke="#1d6f9a"/><svg x="9" y="11" width="13" height="12"><use href="#s-eye"/></svg></svg></button>
    <button aria-label="Browser"><svg width="22" height="22" viewBox="0 0 22 22"><circle cx="11" cy="11" r="8.500" fill="#3f9bd0"/><path d="M4 7q3-5 8-4l1 4-4 5-4-1zM13 12l5-2q0 5-4 7z" fill="#bfe4f5"/><path d="M4 18Q-1 22 2 15M19 6q4-6-4-3" fill="none" stroke="#66666b" stroke-width="1.300"/><path d="M2 19Q13 17 20 4" fill="none" stroke="#dcebf3" stroke-width="1.200"/></svg></button>
    <button aria-label="Full screen"><svg width="20" height="20" viewBox="0 0 20 20"><rect x="1" y="1" width="18" height="18" fill="url(#gSheet)" stroke="#1d6d8c" stroke-width="1.500"/></svg></button>
    <i class="vr"></i>
    <p><b></b>Created set: Set01 from selection.</p>
    <div class="stright">
      <i class="vr"></i><i class="vr v2"></i>
      <svg width="22" height="20" viewBox="0 0 22 20"><path d="M5 1h4v2h3V1h4l1 5 4 5v8h-8v-6H9v6H1v-8l3-5z" fill="#3e3e42"/><path d="M5 6l-2 6v5M14 6l2 6v5" stroke="#aaa" fill="none" stroke-width="1.500"/></svg>
      <svg width="8" height="6" class="cx"><use href="#caret"/></svg><i class="vr"></i>
      <svg width="20" height="16" viewBox="0 0 20 16"><rect x="1" y="1" width="18" height="14" fill="none" stroke="#3e3e42" stroke-width="1.500" stroke-dasharray="4 3"/></svg>
      <svg width="8" height="6" class="cx"><use href="#caret"/></svg>
      <svg width="20" height="20" viewBox="0 0 20 20" color="#99999d"><path d="M1 1h18v18H1z" fill="#dedee1" stroke="#99999d" stroke-dasharray="3 2"/><svg x="2" y="2" width="11" height="11"><use href="#s-eye"/></svg><path d="M10 6l8 9-4 .5-1 3z" fill="#eee" stroke="#88888c"/></svg>
      <span class="cnt">3 selected</span>
      <div class="pick split sfilter"><select aria-label="Selection filter"><option>Geometry</option></select><svg width="9" height="6"><use href="#caret"/></svg></div>
      <svg width="14" height="14" viewBox="0 0 14 14" class="grip"><path d="M1 13L13 1M6 13l7-7M10 13l3-3" stroke="#aaa9ae" stroke-width="1.500"/></svg>
    </div>
  </footer>
</div>
</body>
</html>
```
FILE: styles.css
```css
* { box-sizing: border-box; }
body { margin: 0; background: #b8b8bb; color: #48474c; font: 14px/20px "Open Sans", "Noto Sans", sans-serif; }
h1, h2, p { margin: 0; font-size: inherit; font-weight: normal; }
button { font: inherit; color: inherit; background: none; border: 0; padding: 0; display: flex; align-items: center; justify-content: center; }
input, select { font: inherit; color: inherit; border-radius: 0; margin: 0; min-width: 0; }
svg { flex: none; display: block; }
.defs { position: absolute; }
.vr { width: 1px; height: 30px; background: #a9a8ad; flex: none; }

.window { min-height: 100vh; display: flex; flex-direction: column; border: 3px solid #b8b7bc; border-top: 2px solid #77767a; border-bottom: 2px solid #3d3d45; padding: 4px 0; background: #b8b7bc; }

/* Title bar */
.titlebar { height: 34px; background: #dfdfe3; display: flex; align-items: center; position: relative; padding: 0 12px 0 8px; }
.logo { margin-right: 2px; }
.brand { font: 22px/24px "Open Sans", sans-serif; color: #42474b; width: 64px; }
.brand sup { font-size: 10px; line-height: 8px; vertical-align: 8px; }
.quick { display: flex; align-items: center; gap: 10px; padding-left: 10px; color: #48474c; }
.quick .drop { color: #a9a9ad; }
.quick .drop.dark { color: #48474c; }
.quick .labelled { color: #a9a9ad; gap: 6px; margin-right: 5px; }
.title { position: absolute; left: 0; right: 0; text-align: center; font-size: 16px; color: #b4b4b8; pointer-events: none; }
.winbtns { margin-left: auto; display: flex; gap: 21px; }

/* Main tabs */
.tabs { height: 35px; background: #414649; color: #f4f4f5; display: flex; font-size: 16px; }
.tabs > button { padding: 0 29px; }
.tabs .file { width: 75px; padding: 0; background: linear-gradient(#5ecb40, #4caa30); }
.tabs .current { background: #fcfbff; color: #48474c; font-style: italic; width: 188px; padding: 0; margin-left: 2px; font-size: 17px; }
.tabtools { margin-left: auto; display: flex; align-items: center; padding-right: 10px; }
.chev { margin: 0 8px 8px 0; }
.search { width: 304px; height: 28px; display: grid; align-items: center; }
.search > * { grid-area: 1 / 1; }
.search input { height: 28px; border: 1px solid #bbb; background: #fff; width: 100%; }
.search svg { justify-self: end; margin-right: 2px; }
.find { width: 30px; height: 33px; background: #dfdfe3; margin: 0 7px 0 2px; }
.hat { margin-right: 10px; }
.help { font-weight: bold; font-size: 18px; margin-left: 5px; }

/* Ribbon */
.ribbon { height: 136px; display: flex; background: #fcfbff; border-bottom: 1px solid #b5b4b9; }
.mode { width: 69px; display: flex; justify-content: flex-end; padding: 44px 15px 0 0; border-right: 1px solid #a9a8ad; flex: none; }
.ribmid { width: 1289px; flex: none; border-right: 1px solid #a9a8ad; display: flex; flex-direction: column; }
.groups { display: grid; grid-template-columns: 158px 183px 374px 133px 173px 174px 86px; height: 106px; }
.group { padding: 5px 0 0 15px; border-right: 1px solid #dddce1; margin-bottom: 5px; }
.group.last { margin-bottom: 0; padding: 20px 4px 0 0; border-color: #b5b4b9; display: flex; justify-content: center; align-items: flex-start; }
.group h2 { font-weight: bold; line-height: 20px; margin-bottom: 3px; color: #403f44; }
.group .row { display: flex; align-items: center; height: 33px; gap: 4px; white-space: nowrap; }
.group .row .tile { margin-left: auto; margin-right: 25px; }
.two { display: flex; gap: 22px; }
.two .fields { padding-top: 23px; width: 99px; }
.fields { display: grid; grid-template-columns: 1fr 30px; grid-auto-rows: 33px; align-items: center; width: 136px; white-space: nowrap; }
.cmd { gap: 6px; margin-left: 4px; }
.tile { width: 30px; height: 30px; border: 1px solid #c9c8cd; background: linear-gradient(315deg, #5a5960 6px, transparent 6px); }
.pick { display: grid; align-items: center; height: 28px; border: 1px solid #a5a4a9; background: #fcfbff; }
.pick > * { grid-area: 1 / 1; }
.pick select { appearance: none; width: 100%; height: 26px; border: 0; background: none; padding: 0 24px 0 8px; }
.pick svg { justify-self: end; margin-right: 5px; pointer-events: none; }
.pick.split { background: linear-gradient(#a5a4a9, #a5a4a9) right 19px top / 1px 100% no-repeat, #fcfbff; }
.row .pick { width: 121px; }
.row .plain { background: #ecebf0; border-color: #b9b8bd; }
.big { flex-direction: column; gap: 3px; }
.slides { height: 30px; background: #ebebef; padding-left: 361px; display: flex; margin-right: 1px; }
.slides button { background: #e2e1e6; border-right: 2px solid #f6f5fa; padding: 2px 25px 0; }
.slides button:last-child { padding: 2px 23px 0; }
.ribright { flex: 1; display: flex; justify-content: flex-end; align-items: flex-start; padding: 13px 14px 0 0; }
.tip { width: 336px; height: 110px; background: #e1e0e5; padding: 12px 8px; }
.tip p { width: 284px; margin-bottom: 8px; }
.tip a { color: #2a6ea3; }
.datum { width: 63px; border-left: 1px solid #a9a8ad; padding: 9px 2px 0 0; }
.datum .big { width: 100%; gap: 12px; }
.datum .dc { margin-top: 13px; color: #66656a; }

/* Work area */
.work { flex: 1; display: flex; background: #fff; }
.panel { width: 430px; flex: none; background: #fcfbff; border-right: 3px solid #dfdfe3; display: flex; flex-direction: column; }
.ptabs { height: 31px; background: #dfdfe3; display: flex; flex: none; }
.ptabs button { width: 39px; }
.ptabs .on { background: #fcfbff; }
.ptools { height: 41px; display: flex; align-items: center; padding: 3px 7px 0 18px; gap: 7px; flex: none; }
.ptools .dim { color: #aaa9ae; }
.ptools button { min-width: 22px; }
.ptools button:nth-of-type(1) { margin-left: 8px; }
.ptools .pressed { width: 30px; height: 30px; }
.ptools .vr { margin: 0 1px 0 -2px; }
.pressed { background: #dddce1; border: 1px solid #a5a4a9; }
.ptools .pushed { margin-left: auto; }
.pfilter { display: flex; align-items: center; padding: 0 14px; gap: 4px; flex: none; }
.pfilter .mid { margin: 0 11px 0 2px; color: #5c5b60; }
.fbox { flex: 1; display: grid; align-items: center; }
.fbox > * { grid-area: 1 / 1; }
.fbox input { width: 100%; height: 34px; border: 1px solid #a5a4a9; background: #fff; }
.fbox svg { justify-self: end; margin-right: 7px; }
.treebox { flex: 1; margin: 5px 3px 10px 10px; background: linear-gradient(#e9e8ed, #e9e8ed) 293px 0 / 1px 100% no-repeat; }
.tree { border-collapse: collapse; table-layout: fixed; width: 411px; font-size: 12px; }
.tree th { height: 28px; padding: 3px 0 0 6px; font-size: 14px; font-weight: normal; text-align: left; color: #38373c; border-bottom: 1px solid #b9b8be; border-right: 1px solid #c9c8cd; }
.tree th:first-child { width: 294px; }
.tree th i { float: right; width: 1px; height: 22px; background: #c9c8cd; margin-right: 4px; }
.tree td { padding: 0; height: 22px; line-height: 20px; }
.tree td + td { padding-left: 2px; }
.n { display: flex; align-items: center; height: 22px; white-space: nowrap; }
.n span { padding: 0 3px 0 2px; height: 21px; margin-left: 4px; }
.n.root { padding-left: 3px; }
.sel .n span { background: #b5e1ff; color: #16262f; }
.insert { margin: 4px 0 0 3px; height: 7px; width: 408px; border: solid #63c254; border-width: 0 2px; background: linear-gradient(#63c254, #63c254) 0 3px / 100% 2px no-repeat; }

.canvas { flex: 1; position: relative; min-width: 0; overflow: hidden; }
.model { width: 100%; height: 100%; position: absolute; inset: 0; }
.viewbar { position: absolute; top: 7px; left: 499px; height: 38px; display: flex; align-items: center; gap: 2px; padding: 0 3px; border: 1px solid #8f8e93; background: #f9f8fc; }
.viewbar button { width: 30px; height: 30px; background-repeat: no-repeat; }
.viewbar .flag { background-image: linear-gradient(45deg, transparent 50%, #2b8fe0 50%); background-size: 6px 6px; background-position: 23px 1px; }
.viewbar .more { background-image: linear-gradient(135deg, transparent 50%, #66656a 50%); background-size: 4px 4px; background-position: 26px 25px; }

/* Simulation dialog */
.dialog { position: absolute; right: 13px; top: 184px; width: 484px; border: 1px solid #b0afb4; border-radius: 9px; background: #f0f0f5; box-shadow: 0 10px 30px rgba(60, 55, 70, .26); padding: 0 1px; }
.dialog header { height: 36px; background: #dfdee3; border-radius: 9px 9px 0 0; display: grid; grid-template-columns: 1fr auto 1fr; align-items: center; color: #38373c; padding-top: 2px; }
.dialog h2 { grid-column: 2; }
.dialog header button { justify-self: end; margin-right: 12px; }
.menu { height: 38px; display: flex; font-size: 16px; gap: 21px; padding: 2px 0 0 10px; }
.acc { display: flex; flex-direction: column; gap: 2px; background: #f3f3f7; }
.acc button { height: 28px; background: #cac9ce; color: #2c2b30; justify-content: flex-start; padding: 3px 0 0 15px; gap: 12px; }
.acc .open { padding-left: 9px; gap: 10px; }
.seqbox { height: 136px; margin-bottom: -2px; background: #fff; border: 1px solid #a9a8ad; border-bottom: 0; padding: 1px; }
.seq { width: 100%; border-collapse: collapse; table-layout: fixed; }
.seq th { font-weight: normal; text-align: left; height: 27px; padding: 3px 0 0 6px; border: solid #cfced3; border-width: 0 1px 1px 0; background: #fcfbff; color: #38373c; }
.seq th:first-child { width: 326px; }
.seq th:nth-child(2) { width: 70px; }
.seq td { height: 22px; padding: 2px 0 0 3px; line-height: 20px; }
.c1 { background: #ff8519; }
.c2 { background: #ffb822; }
.c3 { background: #fff320; }
.player { display: grid; grid-template-columns: repeat(20, 1fr); gap: 3px 0; padding: 7px 4px 5px; border-bottom: 1px solid #c5c4c9; grid-auto-rows: 29px; }
.player button { border: 1px solid #cbcacf; background: #e7e6eb; margin: 0 1px; }
.w2 { grid-column: span 4; }
.w3 { grid-column: span 6; }
.w4 { grid-column: span 8; }
.player .stop { background: #fcfbff; border-color: #a5a4a9; }
.player .play { background: #e3effb; border-color: #b3d6f0; }
.speed { padding: 13px 5px 4px; border-bottom: 1px solid #c5c4c9; }
.speed label { display: block; }
.speed input { appearance: none; width: 100%; height: 25px; margin: 8px 0 6px; display: block; background: linear-gradient(#8f8e93, #8f8e93) 0 10px / 100% 2px no-repeat; }
.speed input::-webkit-slider-thumb { appearance: none; width: 11px; height: 25px; border: 1px solid #77767b; border-radius: 2px; background: #f6f6fa; }
.ends { display: flex; justify-content: space-between; padding: 0 52px; }
.dialog footer { height: 46px; display: flex; align-items: center; justify-content: center; padding-top: 4px; }
.dialog footer button { width: 60px; height: 30px; border: 1px solid #a5a4a9; background: #fcfbff; }

/* Status bar */
.status { height: 41px; border-top: 1px solid #b5b4b9; background: #fcfbff; display: flex; align-items: center; padding: 0 2px 0 7px; gap: 7px; }
.status .pressed { width: 26px; height: 30px; }
.status > .vr { margin: 0 4px 0 6px; }
.status p { font-size: 12px; display: flex; align-items: center; gap: 6px; }
.status p b { width: 6px; height: 6px; border-radius: 3px; background: #176089; }
.stright { margin-left: auto; display: flex; align-items: center; gap: 8px; }
.stright .v2 { margin-left: -4px; }
.stright .cx { margin: 0 0 0 1px; color: #66656a; }
.stright .cx + svg { margin-left: 4px; }
.cnt { margin-right: 40px; }
.sfilter { width: 217px; }
.grip { margin: 12px 0 0 -4px; }
```
